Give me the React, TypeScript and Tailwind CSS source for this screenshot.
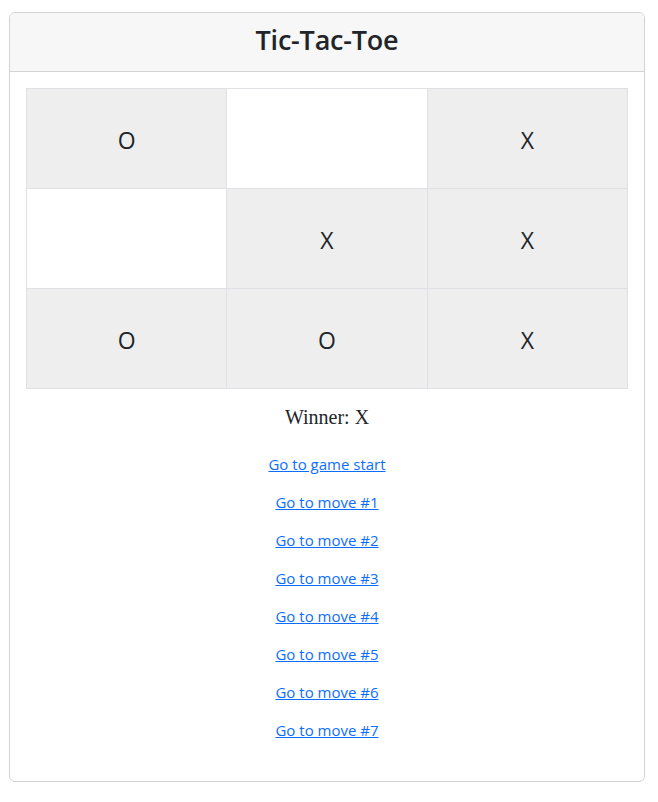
const board: (string | null)[] = ["O", null, "X", null, "X", "X", "O", "O", "X"];

const moves = [
  "Go to game start",
  "Go to move #1",
  "Go to move #2",
  "Go to move #3",
  "Go to move #4",
  "Go to move #5",
  "Go to move #6",
  "Go to move #7",
];

export default function App() {
  return (
    <div className="min-h-screen bg-white pt-[12px] pl-[9px] text-[#212529] font-['Open_Sans',sans-serif]">
      <div className="w-[636px] border border-[#d3d3d3] rounded-[6px] overflow-hidden">
        <div className="h-[59px] bg-[#f7f7f7] border-b border-[#d3d3d3] flex items-center justify-center pb-[6px]">
          <h3 className="text-[27px] font-semibold leading-none tracking-[-0.2px]">Tic-Tac-Toe</h3>
        </div>
        <div className="px-[16px] pt-[16px] pb-[39px] flex flex-col items-center">
          <table className="w-[602px] border-collapse table-fixed">
            <tbody>
              {[0, 1, 2].map((r) => (
                <tr key={r}>
                  {[0, 1, 2].map((c) => {
                    const v = board[r * 3 + c];
                    return (
                      <td
                        key={c}
                        className={
                          "h-[100px] border border-[#dfe1e5] text-center align-middle text-[23px] pt-[3px] " +
                          (v ? "bg-[#eeeeee]" : "bg-white")
                        }
                      >
                        {v}
                      </td>
                    );
                  })}
                </tr>
              ))}
            </tbody>
          </table>
          <div className="mt-[16px] text-[20px] leading-[24px] font-['Liberation_Serif',serif]">Winner: X</div>
          <ul className="mt-[23px] flex flex-col items-center gap-[14px]">
            {moves.map((m) => (
              <li key={m} className="leading-[24px]">
                <a href="#" className="text-[15px] text-[#0d6efd] underline">
                  {m}
                </a>
              </li>
            ))}
          </ul>
        </div>
      </div>
    </div>
  );
}
